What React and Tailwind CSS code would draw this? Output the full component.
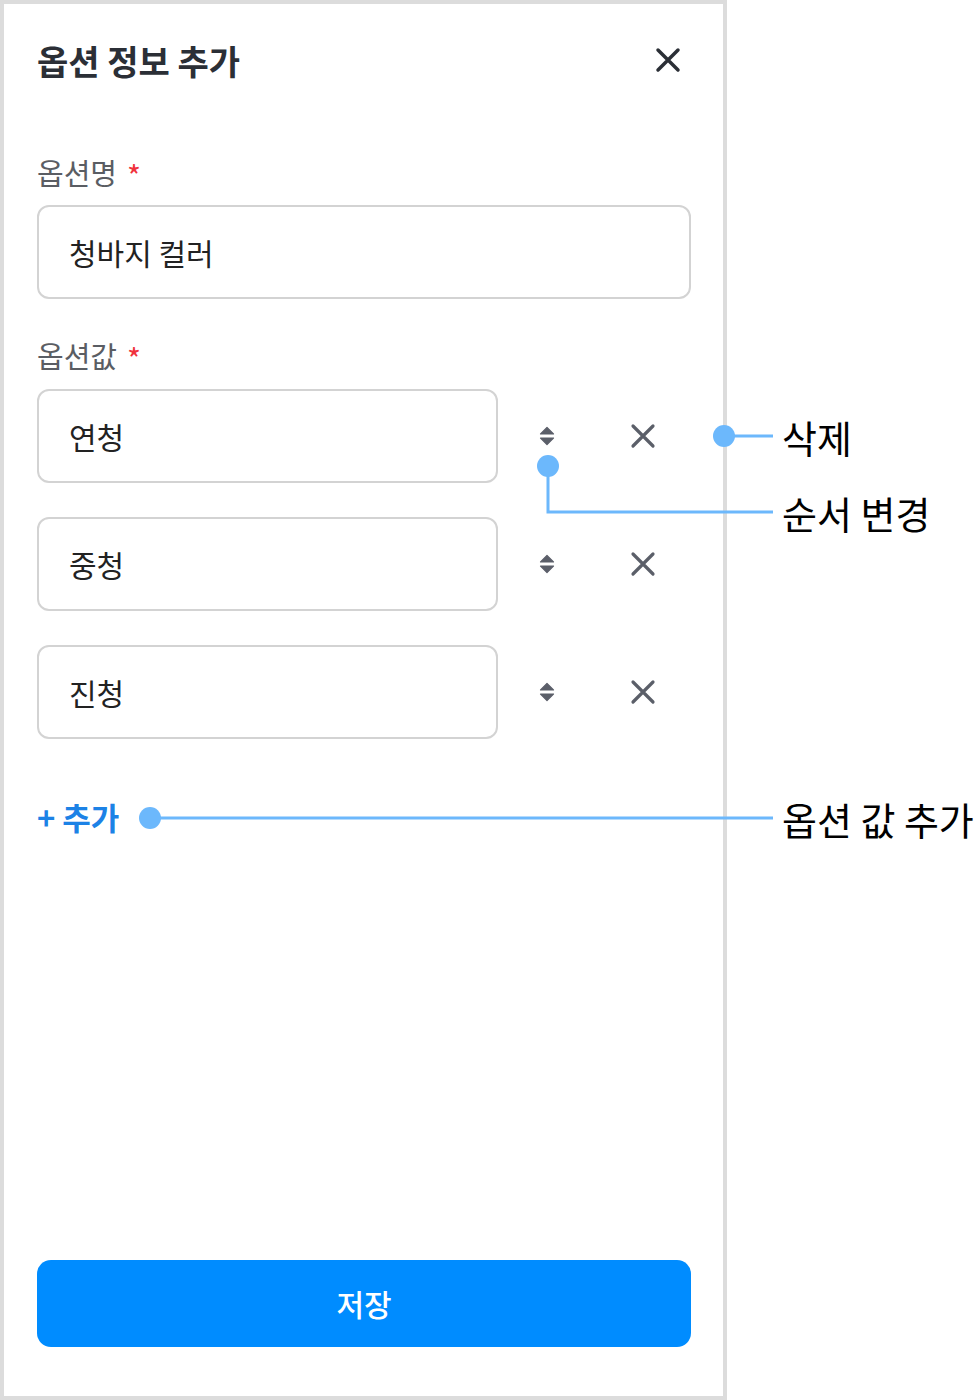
import React from 'react';

const font = { fontFamily: '"Noto Sans CJK KR", "Noto Sans", sans-serif' };

const values = ['연청', '중청', '진청'];

const CloseIcon = ({ size = 26, stroke = 3.5, color = '#2b2f36' }) => (
  <svg width={size} height={size} viewBox="0 0 26 26" fill="none">
    <path d="M3 3L23 23M23 3L3 23" stroke={color} strokeWidth={stroke} strokeLinecap="round" />
  </svg>
);

const SortIcon = () => (
  <svg width="16" height="20" viewBox="0 0 16 20" fill="#5b5f69">
    <path d="M8 1.5L14.5 8H1.5Z" strokeLinejoin="round" stroke="#5b5f69" strokeWidth="1.2" />
    <path d="M8 18.5L14.5 12H1.5Z" strokeLinejoin="round" stroke="#5b5f69" strokeWidth="1.2" />
  </svg>
);

const Label = ({ children }) => (
  <div className="flex items-center gap-[10px] h-[36px] text-[29px] text-[#5a5d63]">
    <span>{children}</span>
    <span className="text-[#f0323c] text-[30px] leading-none mt-[4px]">*</span>
  </div>
);

const Annotation = ({ top, children }) => (
  <div
    className="absolute left-[782px] h-[50px] flex items-center text-[38px] text-black whitespace-nowrap"
    style={{ top: top - 25 }}
  >
    {children}
  </div>
);

export default function App() {
  return (
    <div className="relative w-[976px] h-[1400px] bg-white overflow-hidden" style={font}>
      <div className="w-[727px] h-[1400px] border-4 border-[#dcdcdc] flex flex-col pl-[33px] pr-[32px] pt-[36px] pb-[49px]">
        <div className="flex items-center justify-between h-[40px]">
          <h1 className="text-[34px] font-bold text-[#2b2f36]">옵션 정보 추가</h1>
          <button className="mr-[10px]">
            <CloseIcon />
          </button>
        </div>

        <div className="mt-[75px]">
          <Label>옵션명</Label>
        </div>
        <div className="mt-[14px] h-[94px] rounded-[12px] border-2 border-[#d3d3d3] flex items-center px-[30px] text-[30px] text-[#222]">
          청바지 컬러
        </div>

        <div className="mt-[39px]">
          <Label>옵션값</Label>
        </div>
        <div className="mt-[15px] flex flex-col gap-[34px]">
          {values.map((v) => (
            <div key={v} className="flex items-center">
              <div className="w-[463px] h-[94px] rounded-[12px] border-2 border-[#d3d3d3] flex items-center px-[30px] text-[30px] text-[#222]">
                {v}
              </div>
              <div className="w-[98px] flex justify-center">
                <SortIcon />
              </div>
              <div className="w-[96px] flex justify-center">
                <CloseIcon size={26} stroke={3.2} color="#5b5f69" />
              </div>
            </div>
          ))}
        </div>

        <button className="mt-[60px] self-start h-[36px] flex items-center text-[31px] font-bold text-[#1c82e6]">
          + 추가
        </button>

        <button className="mt-auto h-[87px] rounded-[14px] bg-[#008cff] text-white text-[30px] font-medium flex items-center justify-center">
          저장
        </button>
      </div>

      <svg className="absolute inset-0 pointer-events-none" width="976" height="1400">
        <g stroke="#6cb8fc" strokeWidth="3" fill="none">
          <path d="M724 436H773" />
          <path d="M548 466V512H773" />
          <path d="M150 818H773" />
        </g>
        <g fill="#6cb8fc">
          <circle cx="724" cy="436" r="11" />
          <circle cx="548" cy="466" r="11" />
          <circle cx="150" cy="818" r="11" />
        </g>
      </svg>

      <Annotation top={436}>삭제</Annotation>
      <Annotation top={512}>순서 변경</Annotation>
      <Annotation top={818}>옵션 값 추가</Annotation>
    </div>
  );
}
